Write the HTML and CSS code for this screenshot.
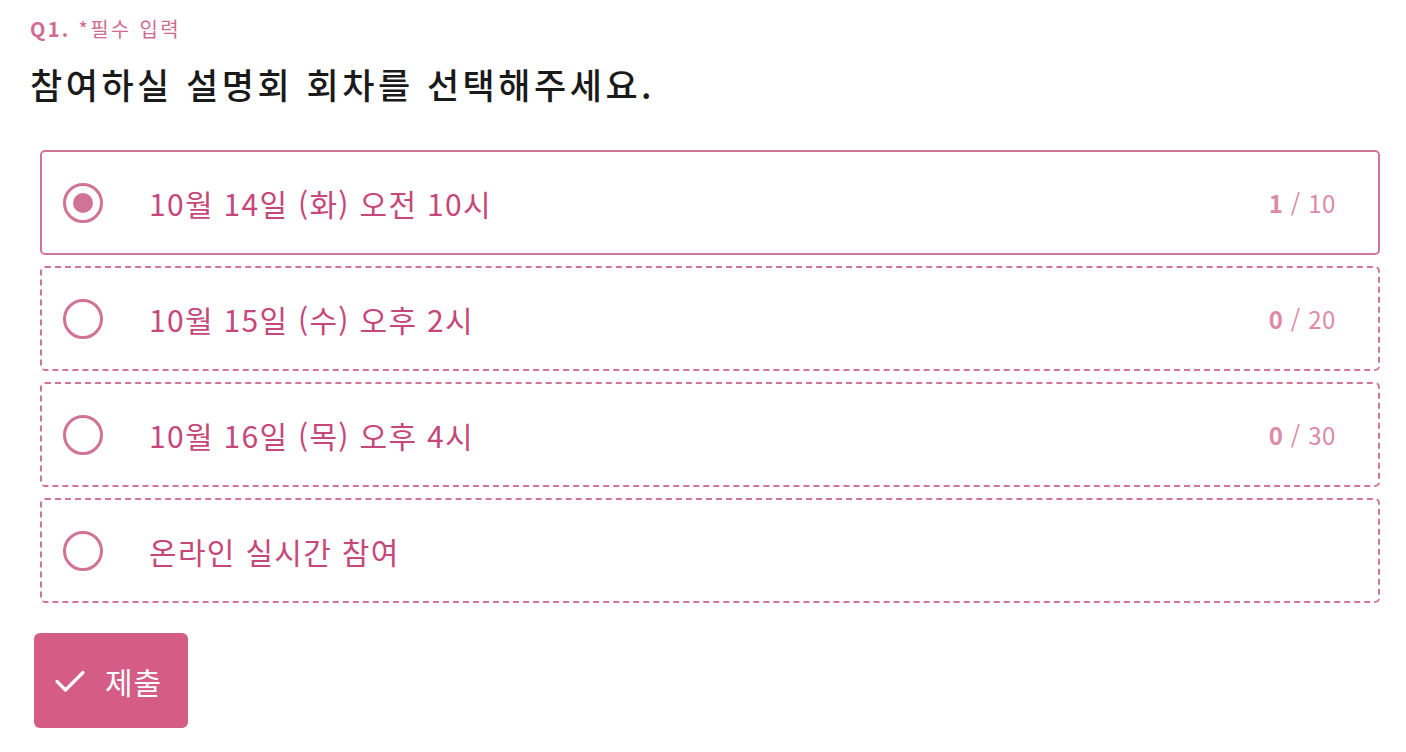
FILE: index.html
```html
<!DOCTYPE html>
<html lang="ko">
<head>
<meta charset="utf-8">
<link rel="stylesheet" href="styles.css">
</head>
<body>
<div class="page">
  <div class="qlabel"><span class="qnum">Q1.</span> <span class="req">*필수 입력</span></div>
  <h1 class="title">참여하실 설명회 회차를 선택해주세요.</h1>
  <div class="options">
    <label class="option selected">
      <span class="radio"><span class="dot"></span></span>
      <span class="text">10월 14일 (화) 오전 10시</span>
      <span class="count"><b>1</b> / 10</span>
    </label>
    <label class="option">
      <span class="radio"></span>
      <span class="text">10월 15일 (수) 오후 2시</span>
      <span class="count"><b>0</b> / 20</span>
    </label>
    <label class="option">
      <span class="radio"></span>
      <span class="text">10월 16일 (목) 오후 4시</span>
      <span class="count"><b>0</b> / 30</span>
    </label>
    <label class="option">
      <span class="radio"></span>
      <span class="text">온라인 실시간 참여</span>
    </label>
  </div>
  <button class="submit">
    <svg class="check" width="32" height="24" viewBox="0 0 32 24"><path d="M3 12.5 L11.5 21 L29 3.5" fill="none" stroke="#fff" stroke-width="3.2" stroke-linecap="round" stroke-linejoin="round"/></svg>
    <span>제출</span>
  </button>
</div>
</body>
</html>
```
FILE: styles.css
```css
* { box-sizing: border-box; }
html, body { margin: 0; padding: 0; background: #fff; }
body { font-family: "Noto Sans CJK KR", "Noto Sans", sans-serif; }
.page { padding: 14px 26px 0 30px; }
.qlabel { font-size: 20px; line-height: 30px; color: #cf6b90; letter-spacing: 2.3px; }
.qnum { font-weight: 700; }
.title { margin: 18px 0 0; font-size: 35px; line-height: 44px; font-weight: 500; color: #1a1a1a; letter-spacing: 3.5px; }
.options { margin: 44px 0 0 10px; display: flex; flex-direction: column; gap: 11px; }
.option { display: flex; align-items: center; height: 105px; border: 2px dashed #cf7597; border-radius: 5px; padding: 0 42px 0 21px; color: #c6487a; }
.option.selected { border-style: solid; }
.radio { width: 40px; height: 40px; border: 3px solid #d07394; border-radius: 50%; display: flex; align-items: center; justify-content: center; flex: none; }
.dot { width: 20px; height: 20px; border-radius: 50%; background: #d07394; }
.text { margin-left: 46px; font-size: 30px; flex: 1; letter-spacing: 1.3px; }
.count { font-size: 24px; color: #dc8aa7; letter-spacing: 0.6px; }
.count b { font-weight: 700; }
.submit { margin: 30px 0 0 4px; width: 154px; height: 95px; background: #d45c85; border: none; border-radius: 6px; display: flex; align-items: center; padding: 0 0 0 20px; gap: 19px; color: #fff; font-family: inherit; font-size: 30px; letter-spacing: 1px; }
.check { flex: none; }
```
